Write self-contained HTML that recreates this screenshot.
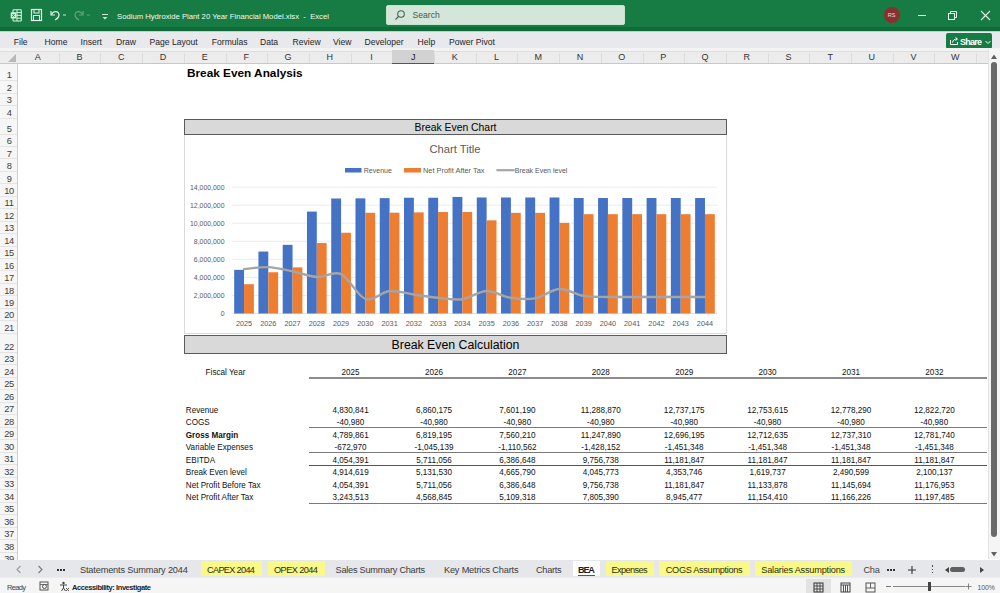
<!DOCTYPE html><html><head><meta charset="utf-8"><style>
*{margin:0;padding:0;box-sizing:border-box}
html,body{width:1000px;height:593px;overflow:hidden;background:#fff;font-family:"Liberation Sans",sans-serif;color:#222}
.a{position:absolute;white-space:nowrap}
</style></head><body><div class="a" style="left:0;top:0;width:1000px;height:31px;background:#177c43"></div>
<div class="a" style="left:0;top:27px;width:1000px;height:3.8px;background:#0f6c38"></div><div class="a" style="left:0;top:30.8px;width:1000px;height:1.3px;background:#a9dcb9"></div>
<svg class="a" style="left:10px;top:8px" width="13" height="15" viewBox="0 0 13 15"><rect x="3" y="1.8" width="8.3" height="11.2" rx="0.8" fill="none" stroke="#d8f3e0" stroke-width="1.1"/><line x1="6.5" y1="4.6" x2="11" y2="4.6" stroke="#d8f3e0" stroke-width="1"/><line x1="6.5" y1="7.4" x2="11" y2="7.4" stroke="#d8f3e0" stroke-width="1"/><line x1="6.5" y1="10.2" x2="11" y2="10.2" stroke="#d8f3e0" stroke-width="1"/><line x1="7" y1="2" x2="7" y2="13" stroke="#d8f3e0" stroke-width="1"/><rect x="0.7" y="4.2" width="5.6" height="6.4" rx="0.6" fill="#d8f3e0"/><path d="M2.3 5.9 L4.7 8.9 M4.7 5.9 L2.3 8.9" stroke="#177c43" stroke-width="0.9"/></svg>
<svg class="a" style="left:30px;top:8px" width="13" height="14" viewBox="0 0 13 14"><rect x="1.5" y="1.5" width="10" height="11" fill="none" stroke="#e8f5ec" stroke-width="1.2"/><rect x="4" y="1.5" width="5" height="3.5" fill="none" stroke="#e8f5ec" stroke-width="1"/><rect x="3.5" y="7.5" width="6" height="5" fill="none" stroke="#e8f5ec" stroke-width="1"/></svg>
<svg class="a" style="left:48px;top:8px" width="22" height="14" viewBox="0 0 22 14"><path d="M3 3 L3 7 L7 7" fill="none" stroke="#e8f5ec" stroke-width="1.2"/><path d="M3.5 6.5 C5 3.5 9 2.5 10.5 5 C12 7.5 10 10.5 7 12" fill="none" stroke="#e8f5ec" stroke-width="1.2"/><line x1="15" y1="7" x2="18" y2="7" stroke="#cfe6d6" stroke-width="1"/></svg>
<svg class="a" style="left:73px;top:8px" width="22" height="14" viewBox="0 0 22 14"><path d="M10 3 L10 7 L6 7" fill="none" stroke="#5fa77c" stroke-width="1.2"/><path d="M9.5 6.5 C8 3.5 4 2.5 2.5 5 C1 7.5 3 10.5 6 12" fill="none" stroke="#5fa77c" stroke-width="1.2"/><line x1="14" y1="7" x2="17" y2="7" stroke="#5fa77c" stroke-width="1"/></svg>
<svg class="a" style="left:101px;top:12.5px" width="8" height="8" viewBox="0 0 8 8"><line x1="1" y1="1.5" x2="7" y2="1.5" stroke="#cfe6d6" stroke-width="1"/><path d="M1.5 4 L4 6.5 L6.5 4 Z" fill="#cfe6d6"/></svg>
<div class="a" style="left:117px;top:10.5px;font-size:7.7px;line-height:12px;color:#f2f8f4">Sodium Hydroxide Plant 20 Year Financial Model.xlsx&nbsp; -&nbsp; Excel</div>
<div class="a" style="left:386px;top:5px;width:239px;height:19.5px;background:#d4e6da;border:1px solid #c3e3cd;border-radius:2px"></div>
<svg class="a" style="left:394px;top:9px" width="12" height="12" viewBox="0 0 12 12"><circle cx="7" cy="5" r="3.3" fill="none" stroke="#44624f" stroke-width="1.1"/><line x1="4.6" y1="7.4" x2="1.5" y2="10.5" stroke="#44624f" stroke-width="1.2"/></svg>
<div class="a" style="left:412.5px;top:9px;font-size:8.6px;line-height:12px;color:#3f5a48">Search</div>
<div class="a" style="left:883.5px;top:7px;width:16px;height:16px;border-radius:50%;background:#8a3030"></div>
<div class="a" style="left:883.5px;top:10px;width:16px;text-align:center;font-size:5.5px;line-height:10px;color:#f3dada">RS</div>
<div class="a" style="left:918px;top:15px;width:8px;height:1px;background:#e8f5ec"></div>
<svg class="a" style="left:947px;top:10px" width="11" height="11" viewBox="0 0 11 11"><rect x="1.5" y="3.5" width="6" height="6" fill="none" stroke="#e8f5ec" stroke-width="1"/><path d="M3.5 3.5 V1.5 H9.5 V7.5 H7.5" fill="none" stroke="#e8f5ec" stroke-width="1"/></svg>
<svg class="a" style="left:980px;top:10px" width="11" height="11" viewBox="0 0 11 11"><path d="M1 1 L10 10 M10 1 L1 10" stroke="#e8f5ec" stroke-width="1.1"/></svg>
<div class="a" style="left:0;top:32.1px;width:1000px;height:16.1px;background:#e8e9ec"></div>
<div class="a" style="left:13.75px;top:35.5px;font-size:8.6px;line-height:12px;color:#262626">File</div>
<div class="a" style="left:44.5px;top:35.5px;font-size:8.6px;line-height:12px;color:#262626">Home</div>
<div class="a" style="left:80.5px;top:35.5px;font-size:8.6px;line-height:12px;color:#262626">Insert</div>
<div class="a" style="left:116px;top:35.5px;font-size:8.6px;line-height:12px;color:#262626">Draw</div>
<div class="a" style="left:149.5px;top:35.5px;font-size:8.6px;line-height:12px;color:#262626">Page Layout</div>
<div class="a" style="left:211.75px;top:35.5px;font-size:8.6px;line-height:12px;color:#262626">Formulas</div>
<div class="a" style="left:260px;top:35.5px;font-size:8.6px;line-height:12px;color:#262626">Data</div>
<div class="a" style="left:292.5px;top:35.5px;font-size:8.6px;line-height:12px;color:#262626">Review</div>
<div class="a" style="left:333px;top:35.5px;font-size:8.6px;line-height:12px;color:#262626">View</div>
<div class="a" style="left:364.5px;top:35.5px;font-size:8.6px;line-height:12px;color:#262626">Developer</div>
<div class="a" style="left:417.5px;top:35.5px;font-size:8.6px;line-height:12px;color:#262626">Help</div>
<div class="a" style="left:449px;top:35.5px;font-size:8.6px;line-height:12px;color:#262626">Power Pivot</div>
<div class="a" style="left:946px;top:33px;width:46px;height:16px;background:#177c43;border-radius:2px"></div>
<svg class="a" style="left:949px;top:36px" width="10" height="10" viewBox="0 0 10 10"><path d="M1.5 4 V8.5 H8.5 V6" fill="none" stroke="#fff" stroke-width="1"/><path d="M3.5 6.5 C4 4 5.5 3 8 3 M6.5 1.5 L8.5 3 L6.5 4.5" fill="none" stroke="#fff" stroke-width="1"/></svg>
<div class="a" style="left:960px;top:35.5px;font-size:9px;letter-spacing:-0.754px;font-weight:bold;line-height:12px;color:#fff">Share</div>
<svg class="a" style="left:985px;top:39.5px" width="6" height="5" viewBox="0 0 6 5"><path d="M0.5 1 L3 3.5 L5.5 1" fill="none" stroke="#fff" stroke-width="1"/></svg>
<div class="a" style="left:0;top:48.2px;width:1000px;height:3.2px;background:#f3f3f3"></div><div class="a" style="left:0;top:51px;width:988px;height:13px;background:#ececec;border-top:1px solid #dedede;border-bottom:1px solid #c8c8c8"></div>
<svg class="a" style="left:7px;top:53px" width="10" height="10" viewBox="0 0 10 10"><path d="M9 1 L9 9 L1 9 Z" fill="#b8b8b8"/></svg>
<div class="a" style="left:58.7px;top:52.5px;width:1px;height:10.5px;background:#dcdcdc"></div>
<div class="a" style="left:17.0px;top:51px;width:41.7px;text-align:center;font-size:9px;line-height:13px;color:#333">A</div>
<div class="a" style="left:100.4px;top:52.5px;width:1px;height:10.5px;background:#dcdcdc"></div>
<div class="a" style="left:58.7px;top:51px;width:41.7px;text-align:center;font-size:9px;line-height:13px;color:#333">B</div>
<div class="a" style="left:142.10000000000002px;top:52.5px;width:1px;height:10.5px;background:#dcdcdc"></div>
<div class="a" style="left:100.4px;top:51px;width:41.7px;text-align:center;font-size:9px;line-height:13px;color:#333">C</div>
<div class="a" style="left:183.8px;top:52.5px;width:1px;height:10.5px;background:#dcdcdc"></div>
<div class="a" style="left:142.10000000000002px;top:51px;width:41.7px;text-align:center;font-size:9px;line-height:13px;color:#333">D</div>
<div class="a" style="left:225.5px;top:52.5px;width:1px;height:10.5px;background:#dcdcdc"></div>
<div class="a" style="left:183.8px;top:51px;width:41.7px;text-align:center;font-size:9px;line-height:13px;color:#333">E</div>
<div class="a" style="left:267.2px;top:52.5px;width:1px;height:10.5px;background:#dcdcdc"></div>
<div class="a" style="left:225.5px;top:51px;width:41.7px;text-align:center;font-size:9px;line-height:13px;color:#333">F</div>
<div class="a" style="left:308.90000000000003px;top:52.5px;width:1px;height:10.5px;background:#dcdcdc"></div>
<div class="a" style="left:267.20000000000005px;top:51px;width:41.7px;text-align:center;font-size:9px;line-height:13px;color:#333">G</div>
<div class="a" style="left:350.6px;top:52.5px;width:1px;height:10.5px;background:#dcdcdc"></div>
<div class="a" style="left:308.90000000000003px;top:51px;width:41.7px;text-align:center;font-size:9px;line-height:13px;color:#333">H</div>
<div class="a" style="left:392.3px;top:52.5px;width:1px;height:10.5px;background:#dcdcdc"></div>
<div class="a" style="left:350.6px;top:51px;width:41.7px;text-align:center;font-size:9px;line-height:13px;color:#333">I</div>
<div class="a" style="left:392.3px;top:50px;width:41.7px;height:13.5px;background:#d2d2d2;border-bottom:1.5px solid #217346"></div>
<div class="a" style="left:434.0px;top:52.5px;width:1px;height:10.5px;background:#dcdcdc"></div>
<div class="a" style="left:392.3px;top:51px;width:41.7px;text-align:center;font-size:9px;line-height:13px;color:#222">J</div>
<div class="a" style="left:475.7px;top:52.5px;width:1px;height:10.5px;background:#dcdcdc"></div>
<div class="a" style="left:434.0px;top:51px;width:41.7px;text-align:center;font-size:9px;line-height:13px;color:#333">K</div>
<div class="a" style="left:517.4000000000001px;top:52.5px;width:1px;height:10.5px;background:#dcdcdc"></div>
<div class="a" style="left:475.70000000000005px;top:51px;width:41.7px;text-align:center;font-size:9px;line-height:13px;color:#333">L</div>
<div class="a" style="left:559.1000000000001px;top:52.5px;width:1px;height:10.5px;background:#dcdcdc"></div>
<div class="a" style="left:517.4000000000001px;top:51px;width:41.7px;text-align:center;font-size:9px;line-height:13px;color:#333">M</div>
<div class="a" style="left:600.8000000000001px;top:52.5px;width:1px;height:10.5px;background:#dcdcdc"></div>
<div class="a" style="left:559.1px;top:51px;width:41.7px;text-align:center;font-size:9px;line-height:13px;color:#333">N</div>
<div class="a" style="left:642.5000000000001px;top:52.5px;width:1px;height:10.5px;background:#dcdcdc"></div>
<div class="a" style="left:600.8000000000001px;top:51px;width:41.7px;text-align:center;font-size:9px;line-height:13px;color:#333">O</div>
<div class="a" style="left:684.2px;top:52.5px;width:1px;height:10.5px;background:#dcdcdc"></div>
<div class="a" style="left:642.5px;top:51px;width:41.7px;text-align:center;font-size:9px;line-height:13px;color:#333">P</div>
<div class="a" style="left:725.9000000000001px;top:52.5px;width:1px;height:10.5px;background:#dcdcdc"></div>
<div class="a" style="left:684.2px;top:51px;width:41.7px;text-align:center;font-size:9px;line-height:13px;color:#333">Q</div>
<div class="a" style="left:767.6000000000001px;top:52.5px;width:1px;height:10.5px;background:#dcdcdc"></div>
<div class="a" style="left:725.9000000000001px;top:51px;width:41.7px;text-align:center;font-size:9px;line-height:13px;color:#333">R</div>
<div class="a" style="left:809.3000000000001px;top:52.5px;width:1px;height:10.5px;background:#dcdcdc"></div>
<div class="a" style="left:767.6px;top:51px;width:41.7px;text-align:center;font-size:9px;line-height:13px;color:#333">S</div>
<div class="a" style="left:851.0000000000001px;top:52.5px;width:1px;height:10.5px;background:#dcdcdc"></div>
<div class="a" style="left:809.3000000000001px;top:51px;width:41.7px;text-align:center;font-size:9px;line-height:13px;color:#333">T</div>
<div class="a" style="left:892.7px;top:52.5px;width:1px;height:10.5px;background:#dcdcdc"></div>
<div class="a" style="left:851.0px;top:51px;width:41.7px;text-align:center;font-size:9px;line-height:13px;color:#333">U</div>
<div class="a" style="left:934.4000000000001px;top:52.5px;width:1px;height:10.5px;background:#dcdcdc"></div>
<div class="a" style="left:892.7px;top:51px;width:41.7px;text-align:center;font-size:9px;line-height:13px;color:#333">V</div>
<div class="a" style="left:976.1000000000001px;top:52.5px;width:1px;height:10.5px;background:#dcdcdc"></div>
<div class="a" style="left:934.4000000000001px;top:51px;width:41.7px;text-align:center;font-size:9px;line-height:13px;color:#333">W</div>
<div class="a" style="left:0;top:63.5px;width:18px;height:496px;background:#f6f6f6;border-right:1px solid #cfcfcf"></div>
<div class="a" style="left:0;top:80.0px;width:17px;height:1px;background:#e4e4e4"></div>
<div class="a" style="left:0.3px;top:69.2px;width:17.5px;height:12px;text-align:center;font-size:9.3px;letter-spacing:-0.35px;line-height:12px;color:#404040">1</div>
<div class="a" style="left:0;top:92.5px;width:17px;height:1px;background:#e4e4e4"></div>
<div class="a" style="left:0.3px;top:81.7px;width:17.5px;height:12px;text-align:center;font-size:9.3px;letter-spacing:-0.35px;line-height:12px;color:#404040">2</div>
<div class="a" style="left:0;top:105.0px;width:17px;height:1px;background:#e4e4e4"></div>
<div class="a" style="left:0.3px;top:94.2px;width:17.5px;height:12px;text-align:center;font-size:9.3px;letter-spacing:-0.35px;line-height:12px;color:#404040">3</div>
<div class="a" style="left:0;top:117.5px;width:17px;height:1px;background:#e4e4e4"></div>
<div class="a" style="left:0.3px;top:106.7px;width:17.5px;height:12px;text-align:center;font-size:9.3px;letter-spacing:-0.35px;line-height:12px;color:#404040">4</div>
<div class="a" style="left:0;top:133.5px;width:17px;height:1px;background:#e4e4e4"></div>
<div class="a" style="left:0.3px;top:122.69999999999999px;width:17.5px;height:12px;text-align:center;font-size:9.3px;letter-spacing:-0.35px;line-height:12px;color:#404040">5</div>
<div class="a" style="left:0;top:145.95px;width:17px;height:1px;background:#e4e4e4"></div>
<div class="a" style="left:0.3px;top:135.14999999999998px;width:17.5px;height:12px;text-align:center;font-size:9.3px;letter-spacing:-0.35px;line-height:12px;color:#404040">6</div>
<div class="a" style="left:0;top:158.4px;width:17px;height:1px;background:#e4e4e4"></div>
<div class="a" style="left:0.3px;top:147.6px;width:17.5px;height:12px;text-align:center;font-size:9.3px;letter-spacing:-0.35px;line-height:12px;color:#404040">7</div>
<div class="a" style="left:0;top:170.85px;width:17px;height:1px;background:#e4e4e4"></div>
<div class="a" style="left:0.3px;top:160.04999999999998px;width:17.5px;height:12px;text-align:center;font-size:9.3px;letter-spacing:-0.35px;line-height:12px;color:#404040">8</div>
<div class="a" style="left:0;top:183.3px;width:17px;height:1px;background:#e4e4e4"></div>
<div class="a" style="left:0.3px;top:172.5px;width:17.5px;height:12px;text-align:center;font-size:9.3px;letter-spacing:-0.35px;line-height:12px;color:#404040">9</div>
<div class="a" style="left:0;top:195.75px;width:17px;height:1px;background:#e4e4e4"></div>
<div class="a" style="left:0.3px;top:184.95px;width:17.5px;height:12px;text-align:center;font-size:9.3px;letter-spacing:-0.35px;line-height:12px;color:#404040">10</div>
<div class="a" style="left:0;top:208.2px;width:17px;height:1px;background:#e4e4e4"></div>
<div class="a" style="left:0.3px;top:197.39999999999998px;width:17.5px;height:12px;text-align:center;font-size:9.3px;letter-spacing:-0.35px;line-height:12px;color:#404040">11</div>
<div class="a" style="left:0;top:220.64999999999998px;width:17px;height:1px;background:#e4e4e4"></div>
<div class="a" style="left:0.3px;top:209.84999999999997px;width:17.5px;height:12px;text-align:center;font-size:9.3px;letter-spacing:-0.35px;line-height:12px;color:#404040">12</div>
<div class="a" style="left:0;top:233.1px;width:17px;height:1px;background:#e4e4e4"></div>
<div class="a" style="left:0.3px;top:222.29999999999998px;width:17.5px;height:12px;text-align:center;font-size:9.3px;letter-spacing:-0.35px;line-height:12px;color:#404040">13</div>
<div class="a" style="left:0;top:245.55px;width:17px;height:1px;background:#e4e4e4"></div>
<div class="a" style="left:0.3px;top:234.75px;width:17.5px;height:12px;text-align:center;font-size:9.3px;letter-spacing:-0.35px;line-height:12px;color:#404040">14</div>
<div class="a" style="left:0;top:258.0px;width:17px;height:1px;background:#e4e4e4"></div>
<div class="a" style="left:0.3px;top:247.2px;width:17.5px;height:12px;text-align:center;font-size:9.3px;letter-spacing:-0.35px;line-height:12px;color:#404040">15</div>
<div class="a" style="left:0;top:270.45px;width:17px;height:1px;background:#e4e4e4"></div>
<div class="a" style="left:0.3px;top:259.65px;width:17.5px;height:12px;text-align:center;font-size:9.3px;letter-spacing:-0.35px;line-height:12px;color:#404040">16</div>
<div class="a" style="left:0;top:282.9px;width:17px;height:1px;background:#e4e4e4"></div>
<div class="a" style="left:0.3px;top:272.09999999999997px;width:17.5px;height:12px;text-align:center;font-size:9.3px;letter-spacing:-0.35px;line-height:12px;color:#404040">17</div>
<div class="a" style="left:0;top:295.35px;width:17px;height:1px;background:#e4e4e4"></div>
<div class="a" style="left:0.3px;top:284.55px;width:17.5px;height:12px;text-align:center;font-size:9.3px;letter-spacing:-0.35px;line-height:12px;color:#404040">18</div>
<div class="a" style="left:0;top:307.79999999999995px;width:17px;height:1px;background:#e4e4e4"></div>
<div class="a" style="left:0.3px;top:296.99999999999994px;width:17.5px;height:12px;text-align:center;font-size:9.3px;letter-spacing:-0.35px;line-height:12px;color:#404040">19</div>
<div class="a" style="left:0;top:320.25px;width:17px;height:1px;background:#e4e4e4"></div>
<div class="a" style="left:0.3px;top:309.45px;width:17.5px;height:12px;text-align:center;font-size:9.3px;letter-spacing:-0.35px;line-height:12px;color:#404040">20</div>
<div class="a" style="left:0;top:332.7px;width:17px;height:1px;background:#e4e4e4"></div>
<div class="a" style="left:0.3px;top:321.9px;width:17.5px;height:12px;text-align:center;font-size:9.3px;letter-spacing:-0.35px;line-height:12px;color:#404040">21</div>
<div class="a" style="left:0;top:351.7px;width:17px;height:1px;background:#e4e4e4"></div>
<div class="a" style="left:0.3px;top:340.9px;width:17.5px;height:12px;text-align:center;font-size:9.3px;letter-spacing:-0.35px;line-height:12px;color:#404040">22</div>
<div class="a" style="left:0;top:364.2px;width:17px;height:1px;background:#e4e4e4"></div>
<div class="a" style="left:0.3px;top:353.4px;width:17.5px;height:12px;text-align:center;font-size:9.3px;letter-spacing:-0.35px;line-height:12px;color:#404040">23</div>
<div class="a" style="left:0;top:376.7px;width:17px;height:1px;background:#e4e4e4"></div>
<div class="a" style="left:0.3px;top:365.9px;width:17.5px;height:12px;text-align:center;font-size:9.3px;letter-spacing:-0.35px;line-height:12px;color:#404040">24</div>
<div class="a" style="left:0;top:389.2px;width:17px;height:1px;background:#e4e4e4"></div>
<div class="a" style="left:0.3px;top:378.4px;width:17.5px;height:12px;text-align:center;font-size:9.3px;letter-spacing:-0.35px;line-height:12px;color:#404040">25</div>
<div class="a" style="left:0;top:401.7px;width:17px;height:1px;background:#e4e4e4"></div>
<div class="a" style="left:0.3px;top:390.9px;width:17.5px;height:12px;text-align:center;font-size:9.3px;letter-spacing:-0.35px;line-height:12px;color:#404040">26</div>
<div class="a" style="left:0;top:414.2px;width:17px;height:1px;background:#e4e4e4"></div>
<div class="a" style="left:0.3px;top:403.4px;width:17.5px;height:12px;text-align:center;font-size:9.3px;letter-spacing:-0.35px;line-height:12px;color:#404040">27</div>
<div class="a" style="left:0;top:426.7px;width:17px;height:1px;background:#e4e4e4"></div>
<div class="a" style="left:0.3px;top:415.9px;width:17.5px;height:12px;text-align:center;font-size:9.3px;letter-spacing:-0.35px;line-height:12px;color:#404040">28</div>
<div class="a" style="left:0;top:439.2px;width:17px;height:1px;background:#e4e4e4"></div>
<div class="a" style="left:0.3px;top:428.4px;width:17.5px;height:12px;text-align:center;font-size:9.3px;letter-spacing:-0.35px;line-height:12px;color:#404040">29</div>
<div class="a" style="left:0;top:451.7px;width:17px;height:1px;background:#e4e4e4"></div>
<div class="a" style="left:0.3px;top:440.9px;width:17.5px;height:12px;text-align:center;font-size:9.3px;letter-spacing:-0.35px;line-height:12px;color:#404040">30</div>
<div class="a" style="left:0;top:464.2px;width:17px;height:1px;background:#e4e4e4"></div>
<div class="a" style="left:0.3px;top:453.4px;width:17.5px;height:12px;text-align:center;font-size:9.3px;letter-spacing:-0.35px;line-height:12px;color:#404040">31</div>
<div class="a" style="left:0;top:476.7px;width:17px;height:1px;background:#e4e4e4"></div>
<div class="a" style="left:0.3px;top:465.9px;width:17.5px;height:12px;text-align:center;font-size:9.3px;letter-spacing:-0.35px;line-height:12px;color:#404040">32</div>
<div class="a" style="left:0;top:489.2px;width:17px;height:1px;background:#e4e4e4"></div>
<div class="a" style="left:0.3px;top:478.4px;width:17.5px;height:12px;text-align:center;font-size:9.3px;letter-spacing:-0.35px;line-height:12px;color:#404040">33</div>
<div class="a" style="left:0;top:501.7px;width:17px;height:1px;background:#e4e4e4"></div>
<div class="a" style="left:0.3px;top:490.9px;width:17.5px;height:12px;text-align:center;font-size:9.3px;letter-spacing:-0.35px;line-height:12px;color:#404040">34</div>
<div class="a" style="left:0;top:514.2px;width:17px;height:1px;background:#e4e4e4"></div>
<div class="a" style="left:0.3px;top:503.40000000000003px;width:17.5px;height:12px;text-align:center;font-size:9.3px;letter-spacing:-0.35px;line-height:12px;color:#404040">35</div>
<div class="a" style="left:0;top:526.7px;width:17px;height:1px;background:#e4e4e4"></div>
<div class="a" style="left:0.3px;top:515.9000000000001px;width:17.5px;height:12px;text-align:center;font-size:9.3px;letter-spacing:-0.35px;line-height:12px;color:#404040">36</div>
<div class="a" style="left:0;top:539.2px;width:17px;height:1px;background:#e4e4e4"></div>
<div class="a" style="left:0.3px;top:528.4000000000001px;width:17.5px;height:12px;text-align:center;font-size:9.3px;letter-spacing:-0.35px;line-height:12px;color:#404040">37</div>
<div class="a" style="left:0;top:551.7px;width:17px;height:1px;background:#e4e4e4"></div>
<div class="a" style="left:0.3px;top:540.9000000000001px;width:17.5px;height:12px;text-align:center;font-size:9.3px;letter-spacing:-0.35px;line-height:12px;color:#404040">38</div>
<div class="a" style="left:0;top:564.2px;width:17px;height:1px;background:#e4e4e4"></div>
<div class="a" style="left:0.3px;top:553.4000000000001px;width:17.5px;height:12px;text-align:center;font-size:9.3px;letter-spacing:-0.35px;line-height:12px;color:#404040">39</div>
<div class="a" style="left:187px;top:66px;font-size:11.8px;line-height:14px;font-weight:bold;color:#000">Break Even Analysis</div>
<div class="a" style="left:184px;top:119px;width:543px;height:16px;background:#d9d9d9;border:1.1px solid #5a5a5a"></div>
<div class="a" style="left:184px;top:121px;width:543px;text-align:center;font-size:10.4px;line-height:13px;color:#000">Break Even Chart</div>
<div class="a" style="left:184px;top:135px;width:543px;height:199px;background:#fff;border:1px solid #d9d9d9;border-top:none"></div>
<svg class="a" style="left:0;top:0" width="1000" height="593" viewBox="0 0 1000 593"><line x1="231.9" y1="295.44" x2="717.10" y2="295.44" stroke="#e6e6e6" stroke-width="0.8"/><line x1="231.9" y1="277.39" x2="717.10" y2="277.39" stroke="#e6e6e6" stroke-width="0.8"/><line x1="231.9" y1="259.33" x2="717.10" y2="259.33" stroke="#e6e6e6" stroke-width="0.8"/><line x1="231.9" y1="241.27" x2="717.10" y2="241.27" stroke="#e6e6e6" stroke-width="0.8"/><line x1="231.9" y1="223.21" x2="717.10" y2="223.21" stroke="#e6e6e6" stroke-width="0.8"/><line x1="231.9" y1="205.16" x2="717.10" y2="205.16" stroke="#e6e6e6" stroke-width="0.8"/><line x1="231.9" y1="187.10" x2="717.10" y2="187.10" stroke="#e6e6e6" stroke-width="0.8"/><line x1="231.9" y1="313.5" x2="717.10" y2="313.5" stroke="#d9d9d9" stroke-width="0.8"/><rect x="234.18" y="269.88" width="9.85" height="43.62" fill="#4472c4"/><rect x="244.03" y="284.22" width="9.85" height="29.28" fill="#ed7d31"/><rect x="258.44" y="251.56" width="9.85" height="61.94" fill="#4472c4"/><rect x="268.29" y="272.25" width="9.85" height="41.25" fill="#ed7d31"/><rect x="282.70" y="244.87" width="9.85" height="68.63" fill="#4472c4"/><rect x="292.55" y="267.37" width="9.85" height="46.13" fill="#ed7d31"/><rect x="306.96" y="211.58" width="9.85" height="101.92" fill="#4472c4"/><rect x="316.81" y="243.03" width="9.85" height="70.47" fill="#ed7d31"/><rect x="331.22" y="198.50" width="9.85" height="115.00" fill="#4472c4"/><rect x="341.07" y="232.74" width="9.85" height="80.76" fill="#ed7d31"/><rect x="355.48" y="198.35" width="9.85" height="115.15" fill="#4472c4"/><rect x="365.33" y="212.79" width="9.85" height="100.71" fill="#ed7d31"/><rect x="379.74" y="198.13" width="9.85" height="115.37" fill="#4472c4"/><rect x="389.59" y="212.68" width="9.85" height="100.82" fill="#ed7d31"/><rect x="404.00" y="197.73" width="9.85" height="115.77" fill="#4472c4"/><rect x="413.85" y="212.40" width="9.85" height="101.10" fill="#ed7d31"/><rect x="428.26" y="197.75" width="9.85" height="115.75" fill="#4472c4"/><rect x="438.11" y="212.02" width="9.85" height="101.48" fill="#ed7d31"/><rect x="452.52" y="196.94" width="9.85" height="116.56" fill="#4472c4"/><rect x="462.37" y="212.02" width="9.85" height="101.48" fill="#ed7d31"/><rect x="476.78" y="197.48" width="9.85" height="116.02" fill="#4472c4"/><rect x="486.63" y="220.33" width="9.85" height="93.17" fill="#ed7d31"/><rect x="501.04" y="197.48" width="9.85" height="116.02" fill="#4472c4"/><rect x="510.89" y="212.83" width="9.85" height="100.67" fill="#ed7d31"/><rect x="525.30" y="197.48" width="9.85" height="116.02" fill="#4472c4"/><rect x="535.15" y="212.83" width="9.85" height="100.67" fill="#ed7d31"/><rect x="549.56" y="197.48" width="9.85" height="116.02" fill="#4472c4"/><rect x="559.41" y="222.85" width="9.85" height="90.65" fill="#ed7d31"/><rect x="573.82" y="198.02" width="9.85" height="115.48" fill="#4472c4"/><rect x="583.67" y="214.19" width="9.85" height="99.31" fill="#ed7d31"/><rect x="598.08" y="198.02" width="9.85" height="115.48" fill="#4472c4"/><rect x="607.93" y="214.19" width="9.85" height="99.31" fill="#ed7d31"/><rect x="622.34" y="198.02" width="9.85" height="115.48" fill="#4472c4"/><rect x="632.19" y="214.19" width="9.85" height="99.31" fill="#ed7d31"/><rect x="646.60" y="198.02" width="9.85" height="115.48" fill="#4472c4"/><rect x="656.45" y="214.19" width="9.85" height="99.31" fill="#ed7d31"/><rect x="670.86" y="198.02" width="9.85" height="115.48" fill="#4472c4"/><rect x="680.71" y="214.19" width="9.85" height="99.31" fill="#ed7d31"/><rect x="695.12" y="198.02" width="9.85" height="115.48" fill="#4472c4"/><rect x="704.97" y="214.19" width="9.85" height="99.31" fill="#ed7d31"/><path d="M244.03,269.13 C248.07,268.80 260.20,266.80 268.29,267.17 C276.38,267.54 284.46,269.74 292.55,271.37 C300.64,273.01 308.72,276.50 316.81,276.97 C324.90,277.44 332.98,270.54 341.07,274.19 C349.16,277.84 357.24,296.07 365.33,298.88 C373.42,301.68 381.50,291.74 389.59,291.01 C397.68,290.29 405.76,293.41 413.85,294.54 C421.94,295.67 430.02,297.01 438.11,297.79 C446.20,298.57 454.28,300.36 462.37,299.23 C470.46,298.11 478.54,291.26 486.63,291.02 C494.72,290.78 502.80,296.57 510.89,297.79 C518.98,299.01 527.06,299.81 535.15,298.33 C543.24,296.86 551.32,289.35 559.41,288.94 C567.50,288.54 575.58,294.56 583.67,295.89 C591.76,297.23 599.84,296.80 607.93,296.98 C616.02,297.16 624.10,296.98 632.19,296.98 C640.28,296.98 648.36,296.98 656.45,296.98 C664.54,296.98 672.62,296.98 680.71,296.98 C688.80,296.98 700.93,296.98 704.97,296.98" fill="none" stroke="#a5a5a5" stroke-width="2.4" stroke-linecap="round"/><text x="224.5" y="316.00" font-size="6.9" font-family="Liberation Sans" fill="#595959" text-anchor="end">0</text><text x="224.5" y="297.94" font-size="6.9" font-family="Liberation Sans" fill="#595959" text-anchor="end">2,000,000</text><text x="224.5" y="279.89" font-size="6.9" font-family="Liberation Sans" fill="#595959" text-anchor="end">4,000,000</text><text x="224.5" y="261.83" font-size="6.9" font-family="Liberation Sans" fill="#595959" text-anchor="end">6,000,000</text><text x="224.5" y="243.77" font-size="6.9" font-family="Liberation Sans" fill="#595959" text-anchor="end">8,000,000</text><text x="224.5" y="225.71" font-size="6.9" font-family="Liberation Sans" fill="#595959" text-anchor="end">10,000,000</text><text x="224.5" y="207.66" font-size="6.9" font-family="Liberation Sans" fill="#595959" text-anchor="end">12,000,000</text><text x="224.5" y="189.60" font-size="6.9" font-family="Liberation Sans" fill="#595959" text-anchor="end">14,000,000</text><text x="244.03" y="326" font-size="7.3" font-family="Liberation Sans" fill="#595959" text-anchor="middle">2025</text><text x="268.29" y="326" font-size="7.3" font-family="Liberation Sans" fill="#595959" text-anchor="middle">2026</text><text x="292.55" y="326" font-size="7.3" font-family="Liberation Sans" fill="#595959" text-anchor="middle">2027</text><text x="316.81" y="326" font-size="7.3" font-family="Liberation Sans" fill="#595959" text-anchor="middle">2028</text><text x="341.07" y="326" font-size="7.3" font-family="Liberation Sans" fill="#595959" text-anchor="middle">2029</text><text x="365.33" y="326" font-size="7.3" font-family="Liberation Sans" fill="#595959" text-anchor="middle">2030</text><text x="389.59" y="326" font-size="7.3" font-family="Liberation Sans" fill="#595959" text-anchor="middle">2031</text><text x="413.85" y="326" font-size="7.3" font-family="Liberation Sans" fill="#595959" text-anchor="middle">2032</text><text x="438.11" y="326" font-size="7.3" font-family="Liberation Sans" fill="#595959" text-anchor="middle">2033</text><text x="462.37" y="326" font-size="7.3" font-family="Liberation Sans" fill="#595959" text-anchor="middle">2034</text><text x="486.63" y="326" font-size="7.3" font-family="Liberation Sans" fill="#595959" text-anchor="middle">2035</text><text x="510.89" y="326" font-size="7.3" font-family="Liberation Sans" fill="#595959" text-anchor="middle">2036</text><text x="535.15" y="326" font-size="7.3" font-family="Liberation Sans" fill="#595959" text-anchor="middle">2037</text><text x="559.41" y="326" font-size="7.3" font-family="Liberation Sans" fill="#595959" text-anchor="middle">2038</text><text x="583.67" y="326" font-size="7.3" font-family="Liberation Sans" fill="#595959" text-anchor="middle">2039</text><text x="607.93" y="326" font-size="7.3" font-family="Liberation Sans" fill="#595959" text-anchor="middle">2040</text><text x="632.19" y="326" font-size="7.3" font-family="Liberation Sans" fill="#595959" text-anchor="middle">2041</text><text x="656.45" y="326" font-size="7.3" font-family="Liberation Sans" fill="#595959" text-anchor="middle">2042</text><text x="680.71" y="326" font-size="7.3" font-family="Liberation Sans" fill="#595959" text-anchor="middle">2043</text><text x="704.97" y="326" font-size="7.3" font-family="Liberation Sans" fill="#595959" text-anchor="middle">2044</text><text x="455" y="153.3" font-size="11.2" font-family="Liberation Sans" fill="#595959" text-anchor="middle">Chart Title</text><rect x="345" y="168" width="16.5" height="4.5" fill="#4472c4"/><text x="363.8" y="172.6" font-size="7.0" font-family="Liberation Sans" fill="#595959">Revenue</text><rect x="404" y="168" width="17" height="4.5" fill="#ed7d31"/><text x="423" y="172.6" font-size="7.4" font-family="Liberation Sans" fill="#595959">Net Profit After Tax</text><line x1="496.4" y1="170.2" x2="514.6" y2="170.2" stroke="#a5a5a5" stroke-width="2.2"/><text x="514.8" y="172.6" font-size="7.0" font-family="Liberation Sans" fill="#595959">Break Even level</text></svg>
<div class="a" style="left:184px;top:334.5px;width:543px;height:19px;background:#d9d9d9;border:1.1px solid #5a5a5a"></div>
<div class="a" style="left:184px;top:338px;width:543px;text-align:center;font-size:12.3px;line-height:14px;color:#000">Break Even Calculation</div>
<div class="a" style="left:183.8px;top:367.0px;width:83.4px;height:12.5px;text-align:center;font-size:8.15px;line-height:12.5px;color:#111">Fiscal Year</div>
<div class="a" style="left:308.90000000000003px;top:367.0px;width:83.4px;height:12.5px;text-align:center;font-size:8.15px;line-height:12.5px;color:#111">2025</div>
<div class="a" style="left:392.3px;top:367.0px;width:83.4px;height:12.5px;text-align:center;font-size:8.15px;line-height:12.5px;color:#111">2026</div>
<div class="a" style="left:475.70000000000005px;top:367.0px;width:83.4px;height:12.5px;text-align:center;font-size:8.15px;line-height:12.5px;color:#111">2027</div>
<div class="a" style="left:559.1px;top:367.0px;width:83.4px;height:12.5px;text-align:center;font-size:8.15px;line-height:12.5px;color:#111">2028</div>
<div class="a" style="left:642.5px;top:367.0px;width:83.4px;height:12.5px;text-align:center;font-size:8.15px;line-height:12.5px;color:#111">2029</div>
<div class="a" style="left:725.9000000000001px;top:367.0px;width:83.4px;height:12.5px;text-align:center;font-size:8.15px;line-height:12.5px;color:#111">2030</div>
<div class="a" style="left:809.3000000000001px;top:367.0px;width:83.4px;height:12.5px;text-align:center;font-size:8.15px;line-height:12.5px;color:#111">2031</div>
<div class="a" style="left:892.7px;top:367.0px;width:83.4px;height:12.5px;text-align:center;font-size:8.15px;line-height:12.5px;color:#111">2032</div>
<div class="a" style="left:185.8px;top:404.5px;height:12.5px;text-align:left;font-size:8.15px;line-height:12.5px;color:#111">Revenue</div>
<div class="a" style="left:308.90000000000003px;top:404.5px;width:83.4px;height:12.5px;text-align:center;font-size:8.15px;line-height:12.5px;color:#111">4,830,841</div>
<div class="a" style="left:392.3px;top:404.5px;width:83.4px;height:12.5px;text-align:center;font-size:8.15px;line-height:12.5px;color:#111">6,860,175</div>
<div class="a" style="left:475.70000000000005px;top:404.5px;width:83.4px;height:12.5px;text-align:center;font-size:8.15px;line-height:12.5px;color:#111">7,601,190</div>
<div class="a" style="left:559.1px;top:404.5px;width:83.4px;height:12.5px;text-align:center;font-size:8.15px;line-height:12.5px;color:#111">11,288,870</div>
<div class="a" style="left:642.5px;top:404.5px;width:83.4px;height:12.5px;text-align:center;font-size:8.15px;line-height:12.5px;color:#111">12,737,175</div>
<div class="a" style="left:725.9000000000001px;top:404.5px;width:83.4px;height:12.5px;text-align:center;font-size:8.15px;line-height:12.5px;color:#111">12,753,615</div>
<div class="a" style="left:809.3000000000001px;top:404.5px;width:83.4px;height:12.5px;text-align:center;font-size:8.15px;line-height:12.5px;color:#111">12,778,290</div>
<div class="a" style="left:892.7px;top:404.5px;width:83.4px;height:12.5px;text-align:center;font-size:8.15px;line-height:12.5px;color:#111">12,822,720</div>
<div class="a" style="left:185.8px;top:417.0px;height:12.5px;text-align:left;font-size:8.15px;line-height:12.5px;color:#111">COGS</div>
<div class="a" style="left:308.90000000000003px;top:417.0px;width:83.4px;height:12.5px;text-align:center;font-size:8.15px;line-height:12.5px;color:#111">-40,980</div>
<div class="a" style="left:392.3px;top:417.0px;width:83.4px;height:12.5px;text-align:center;font-size:8.15px;line-height:12.5px;color:#111">-40,980</div>
<div class="a" style="left:475.70000000000005px;top:417.0px;width:83.4px;height:12.5px;text-align:center;font-size:8.15px;line-height:12.5px;color:#111">-40,980</div>
<div class="a" style="left:559.1px;top:417.0px;width:83.4px;height:12.5px;text-align:center;font-size:8.15px;line-height:12.5px;color:#111">-40,980</div>
<div class="a" style="left:642.5px;top:417.0px;width:83.4px;height:12.5px;text-align:center;font-size:8.15px;line-height:12.5px;color:#111">-40,980</div>
<div class="a" style="left:725.9000000000001px;top:417.0px;width:83.4px;height:12.5px;text-align:center;font-size:8.15px;line-height:12.5px;color:#111">-40,980</div>
<div class="a" style="left:809.3000000000001px;top:417.0px;width:83.4px;height:12.5px;text-align:center;font-size:8.15px;line-height:12.5px;color:#111">-40,980</div>
<div class="a" style="left:892.7px;top:417.0px;width:83.4px;height:12.5px;text-align:center;font-size:8.15px;line-height:12.5px;color:#111">-40,980</div>
<div class="a" style="left:185.8px;top:429.5px;height:12.5px;text-align:left;font-size:8.15px;line-height:12.5px;font-weight:bold;color:#111">Gross Margin</div>
<div class="a" style="left:308.90000000000003px;top:429.5px;width:83.4px;height:12.5px;text-align:center;font-size:8.15px;line-height:12.5px;color:#111">4,789,861</div>
<div class="a" style="left:392.3px;top:429.5px;width:83.4px;height:12.5px;text-align:center;font-size:8.15px;line-height:12.5px;color:#111">6,819,195</div>
<div class="a" style="left:475.70000000000005px;top:429.5px;width:83.4px;height:12.5px;text-align:center;font-size:8.15px;line-height:12.5px;color:#111">7,560,210</div>
<div class="a" style="left:559.1px;top:429.5px;width:83.4px;height:12.5px;text-align:center;font-size:8.15px;line-height:12.5px;color:#111">11,247,890</div>
<div class="a" style="left:642.5px;top:429.5px;width:83.4px;height:12.5px;text-align:center;font-size:8.15px;line-height:12.5px;color:#111">12,696,195</div>
<div class="a" style="left:725.9000000000001px;top:429.5px;width:83.4px;height:12.5px;text-align:center;font-size:8.15px;line-height:12.5px;color:#111">12,712,635</div>
<div class="a" style="left:809.3000000000001px;top:429.5px;width:83.4px;height:12.5px;text-align:center;font-size:8.15px;line-height:12.5px;color:#111">12,737,310</div>
<div class="a" style="left:892.7px;top:429.5px;width:83.4px;height:12.5px;text-align:center;font-size:8.15px;line-height:12.5px;color:#111">12,781,740</div>
<div class="a" style="left:185.8px;top:442.0px;height:12.5px;text-align:left;font-size:8.15px;line-height:12.5px;color:#111">Variable Expenses</div>
<div class="a" style="left:308.90000000000003px;top:442.0px;width:83.4px;height:12.5px;text-align:center;font-size:8.15px;line-height:12.5px;color:#111">-672,970</div>
<div class="a" style="left:392.3px;top:442.0px;width:83.4px;height:12.5px;text-align:center;font-size:8.15px;line-height:12.5px;color:#111">-1,045,139</div>
<div class="a" style="left:475.70000000000005px;top:442.0px;width:83.4px;height:12.5px;text-align:center;font-size:8.15px;line-height:12.5px;color:#111">-1,110,562</div>
<div class="a" style="left:559.1px;top:442.0px;width:83.4px;height:12.5px;text-align:center;font-size:8.15px;line-height:12.5px;color:#111">-1,428,152</div>
<div class="a" style="left:642.5px;top:442.0px;width:83.4px;height:12.5px;text-align:center;font-size:8.15px;line-height:12.5px;color:#111">-1,451,348</div>
<div class="a" style="left:725.9000000000001px;top:442.0px;width:83.4px;height:12.5px;text-align:center;font-size:8.15px;line-height:12.5px;color:#111">-1,451,348</div>
<div class="a" style="left:809.3000000000001px;top:442.0px;width:83.4px;height:12.5px;text-align:center;font-size:8.15px;line-height:12.5px;color:#111">-1,451,348</div>
<div class="a" style="left:892.7px;top:442.0px;width:83.4px;height:12.5px;text-align:center;font-size:8.15px;line-height:12.5px;color:#111">-1,451,348</div>
<div class="a" style="left:185.8px;top:454.5px;height:12.5px;text-align:left;font-size:8.15px;line-height:12.5px;color:#111">EBITDA</div>
<div class="a" style="left:308.90000000000003px;top:454.5px;width:83.4px;height:12.5px;text-align:center;font-size:8.15px;line-height:12.5px;color:#111">4,054,391</div>
<div class="a" style="left:392.3px;top:454.5px;width:83.4px;height:12.5px;text-align:center;font-size:8.15px;line-height:12.5px;color:#111">5,711,056</div>
<div class="a" style="left:475.70000000000005px;top:454.5px;width:83.4px;height:12.5px;text-align:center;font-size:8.15px;line-height:12.5px;color:#111">6,386,648</div>
<div class="a" style="left:559.1px;top:454.5px;width:83.4px;height:12.5px;text-align:center;font-size:8.15px;line-height:12.5px;color:#111">9,756,738</div>
<div class="a" style="left:642.5px;top:454.5px;width:83.4px;height:12.5px;text-align:center;font-size:8.15px;line-height:12.5px;color:#111">11,181,847</div>
<div class="a" style="left:725.9000000000001px;top:454.5px;width:83.4px;height:12.5px;text-align:center;font-size:8.15px;line-height:12.5px;color:#111">11,181,847</div>
<div class="a" style="left:809.3000000000001px;top:454.5px;width:83.4px;height:12.5px;text-align:center;font-size:8.15px;line-height:12.5px;color:#111">11,181,847</div>
<div class="a" style="left:892.7px;top:454.5px;width:83.4px;height:12.5px;text-align:center;font-size:8.15px;line-height:12.5px;color:#111">11,181,847</div>
<div class="a" style="left:185.8px;top:467.0px;height:12.5px;text-align:left;font-size:8.15px;line-height:12.5px;color:#111">Break Even level</div>
<div class="a" style="left:308.90000000000003px;top:467.0px;width:83.4px;height:12.5px;text-align:center;font-size:8.15px;line-height:12.5px;color:#111">4,914,619</div>
<div class="a" style="left:392.3px;top:467.0px;width:83.4px;height:12.5px;text-align:center;font-size:8.15px;line-height:12.5px;color:#111">5,131,530</div>
<div class="a" style="left:475.70000000000005px;top:467.0px;width:83.4px;height:12.5px;text-align:center;font-size:8.15px;line-height:12.5px;color:#111">4,665,790</div>
<div class="a" style="left:559.1px;top:467.0px;width:83.4px;height:12.5px;text-align:center;font-size:8.15px;line-height:12.5px;color:#111">4,045,773</div>
<div class="a" style="left:642.5px;top:467.0px;width:83.4px;height:12.5px;text-align:center;font-size:8.15px;line-height:12.5px;color:#111">4,353,746</div>
<div class="a" style="left:725.9000000000001px;top:467.0px;width:83.4px;height:12.5px;text-align:center;font-size:8.15px;line-height:12.5px;color:#111">1,619,737</div>
<div class="a" style="left:809.3000000000001px;top:467.0px;width:83.4px;height:12.5px;text-align:center;font-size:8.15px;line-height:12.5px;color:#111">2,490,599</div>
<div class="a" style="left:892.7px;top:467.0px;width:83.4px;height:12.5px;text-align:center;font-size:8.15px;line-height:12.5px;color:#111">2,100,137</div>
<div class="a" style="left:185.8px;top:479.5px;height:12.5px;text-align:left;font-size:8.15px;line-height:12.5px;color:#111">Net Profit Before Tax</div>
<div class="a" style="left:308.90000000000003px;top:479.5px;width:83.4px;height:12.5px;text-align:center;font-size:8.15px;line-height:12.5px;color:#111">4,054,391</div>
<div class="a" style="left:392.3px;top:479.5px;width:83.4px;height:12.5px;text-align:center;font-size:8.15px;line-height:12.5px;color:#111">5,711,056</div>
<div class="a" style="left:475.70000000000005px;top:479.5px;width:83.4px;height:12.5px;text-align:center;font-size:8.15px;line-height:12.5px;color:#111">6,386,648</div>
<div class="a" style="left:559.1px;top:479.5px;width:83.4px;height:12.5px;text-align:center;font-size:8.15px;line-height:12.5px;color:#111">9,756,738</div>
<div class="a" style="left:642.5px;top:479.5px;width:83.4px;height:12.5px;text-align:center;font-size:8.15px;line-height:12.5px;color:#111">11,181,847</div>
<div class="a" style="left:725.9000000000001px;top:479.5px;width:83.4px;height:12.5px;text-align:center;font-size:8.15px;line-height:12.5px;color:#111">11,133,878</div>
<div class="a" style="left:809.3000000000001px;top:479.5px;width:83.4px;height:12.5px;text-align:center;font-size:8.15px;line-height:12.5px;color:#111">11,145,694</div>
<div class="a" style="left:892.7px;top:479.5px;width:83.4px;height:12.5px;text-align:center;font-size:8.15px;line-height:12.5px;color:#111">11,176,953</div>
<div class="a" style="left:185.8px;top:492.0px;height:12.5px;text-align:left;font-size:8.15px;line-height:12.5px;color:#111">Net Profit After Tax</div>
<div class="a" style="left:308.90000000000003px;top:492.0px;width:83.4px;height:12.5px;text-align:center;font-size:8.15px;line-height:12.5px;color:#111">3,243,513</div>
<div class="a" style="left:392.3px;top:492.0px;width:83.4px;height:12.5px;text-align:center;font-size:8.15px;line-height:12.5px;color:#111">4,568,845</div>
<div class="a" style="left:475.70000000000005px;top:492.0px;width:83.4px;height:12.5px;text-align:center;font-size:8.15px;line-height:12.5px;color:#111">5,109,318</div>
<div class="a" style="left:559.1px;top:492.0px;width:83.4px;height:12.5px;text-align:center;font-size:8.15px;line-height:12.5px;color:#111">7,805,390</div>
<div class="a" style="left:642.5px;top:492.0px;width:83.4px;height:12.5px;text-align:center;font-size:8.15px;line-height:12.5px;color:#111">8,945,477</div>
<div class="a" style="left:725.9000000000001px;top:492.0px;width:83.4px;height:12.5px;text-align:center;font-size:8.15px;line-height:12.5px;color:#111">11,154,410</div>
<div class="a" style="left:809.3000000000001px;top:492.0px;width:83.4px;height:12.5px;text-align:center;font-size:8.15px;line-height:12.5px;color:#111">11,166,226</div>
<div class="a" style="left:892.7px;top:492.0px;width:83.4px;height:12.5px;text-align:center;font-size:8.15px;line-height:12.5px;color:#111">11,197,485</div>
<div class="a" style="left:308.90000000000003px;top:377px;width:678.0999999999999px;height:2px;background:#8c8c8c"></div>
<div class="a" style="left:308.90000000000003px;top:426.70000000000005px;width:678.0999999999999px;height:1.8px;background:#7a7a7a"></div>
<div class="a" style="left:308.90000000000003px;top:451.5px;width:678.0999999999999px;height:1.8px;background:#7a7a7a"></div>
<div class="a" style="left:308.90000000000003px;top:464.5px;width:678.0999999999999px;height:1.2px;background:#555555"></div>
<div class="a" style="left:308.90000000000003px;top:502.5px;width:678.0999999999999px;height:1.8px;background:#7a7a7a"></div>
<div class="a" style="left:988px;top:49px;width:12px;height:510px;background:#f5f5f5;border-left:1px solid #e3e3e3"></div>
<svg class="a" style="left:990px;top:53px" width="8" height="7" viewBox="0 0 8 7"><path d="M1 6 L4 1.5 L7 6 Z" fill="#606060"/></svg>
<div class="a" style="left:991px;top:62px;width:6px;height:475px;background:#6a6a6a;border-radius:3px"></div>
<svg class="a" style="left:990px;top:551px" width="8" height="7" viewBox="0 0 8 7"><path d="M1 1 L4 5.5 L7 1 Z" fill="#606060"/></svg>
<div class="a" style="left:0;top:559.5px;width:1000px;height:17.5px;background:#e6e7ea"></div>
<svg class="a" style="left:15px;top:565px" width="8" height="9" viewBox="0 0 8 9"><path d="M5.5 1 L2 4.5 L5.5 8" fill="none" stroke="#9a9a9a" stroke-width="1.1"/></svg>
<svg class="a" style="left:36px;top:565px" width="8" height="9" viewBox="0 0 8 9"><path d="M2.5 1 L6 4.5 L2.5 8" fill="none" stroke="#7a7a7a" stroke-width="1.1"/></svg>
<div class="a" style="left:56.5px;top:569px;width:8px;height:1.6px;background:repeating-linear-gradient(90deg,#333 0 1.6px,transparent 1.6px 3.2px)"></div>
<div class="a" style="left:201px;top:560.5px;width:61.30000000000001px;height:15.5px;background:#f9f98a"></div>
<div class="a" style="left:268px;top:560.5px;width:56.69999999999999px;height:15.5px;background:#f9f98a"></div>
<div class="a" style="left:573px;top:560.5px;width:27px;height:15.5px;background:#ffffff"></div>
<div class="a" style="left:605.7px;top:560.5px;width:48.09999999999991px;height:15.5px;background:#f9f98a"></div>
<div class="a" style="left:658.8px;top:560.5px;width:91.0px;height:15.5px;background:#f9f98a"></div>
<div class="a" style="left:755px;top:560.5px;width:97.29999999999995px;height:15.5px;background:#f9f98a"></div>
<div class="a" style="left:80px;top:564px;font-size:9.2px;letter-spacing:-0.158px;line-height:12px;color:#3a3a3a">Statements Summary 2044</div>
<div class="a" style="left:207px;top:564px;font-size:9.2px;letter-spacing:-0.690px;line-height:12px;color:#2b2b10">CAPEX 2044</div>
<div class="a" style="left:274px;top:564px;font-size:9.2px;letter-spacing:-0.574px;line-height:12px;color:#2b2b10">OPEX 2044</div>
<div class="a" style="left:335.6px;top:564px;font-size:9.2px;letter-spacing:-0.257px;line-height:12px;color:#3a3a3a">Sales Summary Charts</div>
<div class="a" style="left:444px;top:564px;font-size:9.2px;letter-spacing:-0.183px;line-height:12px;color:#3a3a3a">Key Metrics Charts</div>
<div class="a" style="left:536px;top:564px;font-size:9.2px;letter-spacing:-0.300px;line-height:12px;color:#3a3a3a">Charts</div>
<div class="a" style="left:578px;top:564px;font-size:9.2px;letter-spacing:-1.212px;line-height:12px;font-weight:bold;color:#1f1f1f">BEA</div>
<div class="a" style="left:578px;top:574.5px;width:17px;height:1.5px;background:#217346"></div>
<div class="a" style="left:611.6px;top:564px;font-size:9.2px;letter-spacing:-0.629px;line-height:12px;color:#2b2b10">Expenses</div>
<div class="a" style="left:665.75px;top:564px;font-size:9.2px;letter-spacing:-0.321px;line-height:12px;color:#2b2b10">COGS Assumptions</div>
<div class="a" style="left:761.3px;top:564px;font-size:9.2px;letter-spacing:-0.208px;line-height:12px;color:#2b2b10">Salaries Assumptions</div>
<div class="a" style="left:863.5px;top:564px;font-size:9.2px;letter-spacing:-0.3px;line-height:12px;color:#444">Cha</div>
<div class="a" style="left:886.5px;top:569px;width:8px;height:1.6px;background:repeating-linear-gradient(90deg,#333 0 1.6px,transparent 1.6px 3.2px)"></div>
<svg class="a" style="left:907px;top:565px" width="10" height="10" viewBox="0 0 10 10"><path d="M5 1 V9 M1 5 H9" stroke="#333" stroke-width="1.1"/></svg>
<div class="a" style="left:931.5px;top:565px;width:1.5px;height:9px;background:repeating-linear-gradient(180deg,#444 0 1.5px,transparent 1.5px 3.5px)"></div>
<svg class="a" style="left:944px;top:566px" width="6" height="8" viewBox="0 0 6 8"><path d="M5 1 L1 4 L5 7 Z" fill="#444"/></svg>
<div class="a" style="left:950px;top:567px;width:15px;height:5px;background:#5f5f5f;border-radius:2.5px"></div>
<svg class="a" style="left:979px;top:566px" width="6" height="8" viewBox="0 0 6 8"><path d="M1 1 L5 4 L1 7 Z" fill="#444"/></svg>
<div class="a" style="left:0;top:577px;width:1000px;height:16px;background:#f5f5f6;border-top:1px solid #ececec"></div>
<div class="a" style="left:7px;top:582px;font-size:7.5px;letter-spacing:-0.670px;line-height:11px;color:#444">Ready</div>
<svg class="a" style="left:39px;top:581px" width="10" height="10" viewBox="0 0 10 10"><rect x="1" y="1" width="8" height="8" fill="none" stroke="#555" stroke-width="1"/><circle cx="5.5" cy="5.5" r="2" fill="none" stroke="#555" stroke-width="1"/><line x1="1" y1="3.5" x2="9" y2="3.5" stroke="#555" stroke-width="0.8"/></svg>
<svg class="a" style="left:59px;top:581px" width="11" height="11" viewBox="0 0 11 11"><circle cx="4.5" cy="2" r="1.2" fill="#444"/><path d="M1 4 H8 M4.5 4 V7 L2.5 10 M4.5 7 L6.5 10" fill="none" stroke="#444" stroke-width="1"/><path d="M7 7 L10 10 M10 7 L7 10" stroke="#444" stroke-width="0.9"/></svg>
<div class="a" style="left:72px;top:582px;font-size:7.5px;letter-spacing:-0.425px;line-height:11px;font-weight:bold;color:#222">Accessibility: Investigate</div>
<div class="a" style="left:806px;top:579px;width:25px;height:14px;background:#e2e2e2"></div>
<svg class="a" style="left:813px;top:582px" width="11" height="11" viewBox="0 0 11 11"><rect x="1" y="1" width="9" height="9" fill="none" stroke="#333" stroke-width="1"/><path d="M4 1 V10 M7 1 V10 M1 4 H10 M1 7 H10" stroke="#333" stroke-width="0.8"/></svg>
<svg class="a" style="left:840px;top:582px" width="11" height="11" viewBox="0 0 11 11"><rect x="1" y="1" width="9" height="9" fill="none" stroke="#444" stroke-width="1"/><path d="M1 3 H10 M3.5 3 V10 M5.5 3 V10 M7.5 3 V10" stroke="#444" stroke-width="0.9"/></svg>
<svg class="a" style="left:865px;top:582px" width="11" height="11" viewBox="0 0 11 11"><rect x="1" y="1" width="9" height="9" fill="none" stroke="#555" stroke-width="1"/><path d="M1 6 H10 M5.5 1 V6" stroke="#555" stroke-width="0.9"/></svg>
<div class="a" style="left:886px;top:586px;width:5px;height:1px;background:#777"></div>
<div class="a" style="left:893px;top:586px;width:72px;height:1px;background:#888"></div>
<div class="a" style="left:928px;top:582px;width:2.5px;height:9px;background:#444"></div>
<svg class="a" style="left:965px;top:583px" width="7" height="7" viewBox="0 0 7 7"><path d="M3.5 0.5 V6.5 M0.5 3.5 H6.5" stroke="#777" stroke-width="0.9"/></svg>
<div class="a" style="left:977.5px;top:582px;font-size:6.8px;line-height:11px;color:#555">100%</div></body></html>
